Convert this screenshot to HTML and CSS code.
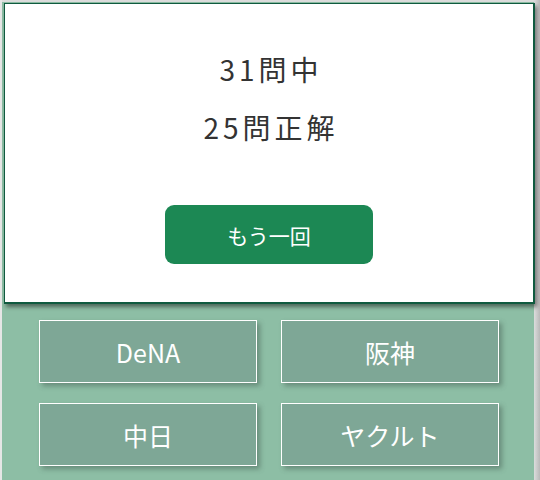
FILE: index.html
```html
<!DOCTYPE html>
<html lang="ja">
<head>
<meta charset="utf-8">
<link rel="stylesheet" href="styles.css">
</head>
<body>
<div class="app">
  <div class="grid">
    <button class="team">DeNA</button>
    <button class="team">阪神</button>
    <button class="team">中日</button>
    <button class="team">ヤクルト</button>
  </div>
  <div class="dialog">
    <p class="line first">31問中</p>
    <p class="line second">25問正解</p>
    <button class="retry">もう一回</button>
  </div>
</div>
</body>
</html>
```
FILE: styles.css
```css
html, body {
  margin: 0;
  padding: 0;
  width: 540px;
  height: 480px;
  overflow: hidden;
}
body {
  background: linear-gradient(to right, #e6e6e6 0, #e6e6e6 2px, transparent 2px), linear-gradient(to left, #b9b9b9, #dcdcdc 6px);
  background-color: #d9d9d9;
  font-family: "Noto Sans CJK JP", "Noto Sans", sans-serif;
}
.app {
  position: relative;
  margin: 2px 6px 0 2px;
  height: 478px;
  background: #8dbea5;
  box-sizing: border-box;
  padding-top: 318px;
}
.grid {
  display: grid;
  grid-template-columns: 218px 218px;
  grid-auto-rows: 63px;
  column-gap: 24px;
  row-gap: 20px;
  margin-left: 37px;
}
.team {
  background: #7ea796;
  border: 1px solid #ffffff;
  color: #ffffff;
  font-family: "Noto Sans CJK JP", "Noto Sans", sans-serif;
  font-size: 25px;
  padding: 0;
  box-shadow: 3px 3px 5px rgba(60, 80, 70, 0.45);
}
.dialog {
  position: absolute;
  left: 2px;
  top: 1px;
  width: 528px;
  height: 298px;
  background: #ffffff;
  border: 1px solid #0f5a3f;
  border-bottom-width: 2px;
  border-right-width: 2px;
  box-shadow: 2px 3px 4px rgba(0, 0, 0, 0.45);
  display: flex;
  flex-direction: column;
  align-items: center;
}
.line {
  margin: 0;
  font-size: 28px;
  color: #333333;
  letter-spacing: 4px;
  line-height: 44px;
  padding-left: 4px;
}
.first {
  margin-top: 43px;
}
.second {
  margin-top: 14px;
}
.retry {
  margin-top: 56px;
  width: 208px;
  height: 59px;
  background: #1c8854;
  border: none;
  border-radius: 9px;
  color: #ffffff;
  font-family: "Noto Sans CJK JP", "Noto Sans", sans-serif;
  font-size: 21px;
  padding: 0;
}
```
